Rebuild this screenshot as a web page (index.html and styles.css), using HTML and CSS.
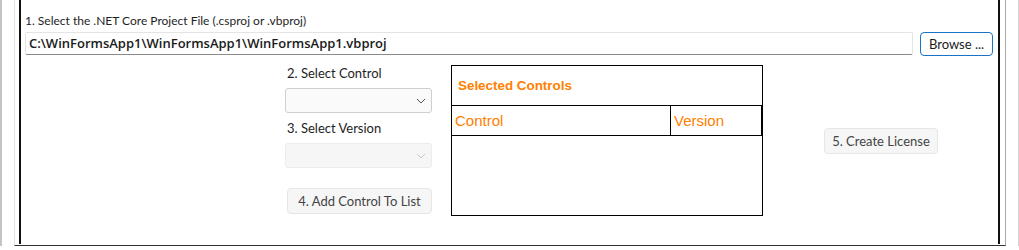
FILE: index.html
```html
<!DOCTYPE html>
<html lang="en">
<head>
    <meta charset="UTF-8">
    <title>License Creator</title>
    <link rel="stylesheet" href="styles.css">
</head>
<body>
    <div class="frame">
        <div class="panel">
            <div class="label">1. Select the .NET Core Project File (.csproj or .vbproj)</div>
            <div class="file-row">
                <div class="file-path">C:\WinFormsApp1\WinFormsApp1\WinFormsApp1.vbproj</div>
                <button class="browse-btn">Browse ...</button>
            </div>

            <div class="lower">
                <div class="picker">
                    <div class="label picker-label">2. Select Control</div>
                    <div class="select">
                        <svg width="10" height="6" viewBox="0 0 10 6"><path d="M1 1 L5 5 L9 1" fill="none" stroke="#555" stroke-width="1"/></svg>
                    </div>
                    <div class="label picker-label label-version">3. Select Version</div>
                    <div class="select disabled">
                        <svg width="10" height="6" viewBox="0 0 10 6"><path d="M1 1 L5 5 L9 1" fill="none" stroke="#c8c8c8" stroke-width="1"/></svg>
                    </div>
                    <button class="btn btn-add">4. Add Control To List</button>
                </div>

                <div class="list">
                    <div class="list-title">Selected Controls</div>
                    <div class="list-head">
                        <div class="col-control">Control</div>
                        <div class="col-version">Version</div>
                    </div>
                </div>

                <button class="btn btn-license">5. Create License</button>
            </div>
        </div>
    </div>
</body>
</html>
```

FILE: styles.css
```css
body {
    margin: 0;
    background-color: #fff;
    border-left: 2px solid #c4c4c4;
    border-right: 1px solid #d4d4d4;
    font-family: Lato, "Liberation Sans", sans-serif;
    color: #222;
}
.frame {
    margin-left: 12px;
    width: 990px;
    height: 245px;
    border-left: 1px solid #e2e2e2;
    border-right: 1px solid #a8a8a8;
    border-bottom: 1px solid #333;
    box-shadow: 0 1px 0 #a0a0a0;
}
.panel {
    margin-left: 4px;
    width: 968px;
    height: 231px;
    border-left: 2px solid #111;
    border-right: 2px solid #111;
    padding: 13px 5px 0 4px;
}
.label {
    font-size: 12px;
    line-height: 16px;
    color: #1e1e1e;
}
.picker-label {
    font-size: 13px;
    margin-left: 2px;
}
.file-row {
    display: flex;
    margin-top: 3px;
    height: 24px;
}
.file-path {
    flex: 1;
    height: 23px;
    box-sizing: border-box;
    border: 1px solid #e4e4e4;
    border-bottom: 1px solid #8a8a8a;
    border-radius: 2px;
    padding: 0 3px;
    font-family: "Open Sans", sans-serif;
    font-weight: 600;
    font-size: 13px;
    line-height: 21px;
    color: #1a1a1a;
}
.browse-btn {
    margin-left: 7px;
    width: 73px;
    height: 24px;
    background-color: #fff;
    border: 1px solid #1a73c8;
    border-radius: 4px;
    font-family: Lato, sans-serif;
    font-size: 13px;
    color: #1a1a1a;
    padding: 0;
}
.lower {
    display: flex;
    align-items: flex-start;
    margin-top: 9px;
    margin-left: 260px;
}
.picker {
    width: 147px;
}
.select {
    margin-top: 7px;
    height: 25px;
    box-sizing: border-box;
    border: 1px solid #cfcfcf;
    border-radius: 3px;
    background-color: #fafafa;
    display: flex;
    align-items: center;
    justify-content: flex-end;
    padding-right: 5px;
}
.select.disabled {
    border-color: #ececec;
    background-color: #f6f6f6;
}
.label-version {
    margin-top: 7px;
}
.btn {
    height: 26px;
    box-sizing: border-box;
    background-color: #f6f6f6;
    border: 1px solid #e6e6e6;
    border-radius: 4px;
    font-family: Lato, sans-serif;
    font-size: 13px;
    color: #444;
    padding: 0;
}
.btn-add {
    margin-top: 20px;
    margin-left: 2px;
    width: 145px;
}
.list {
    margin-left: 19px;
    width: 312px;
    height: 151px;
    box-sizing: border-box;
    border: 1px solid #000;
    font-family: Arial, "Liberation Sans", sans-serif;
    color: #ff8000;
}
.list-title {
    height: 40px;
    box-sizing: border-box;
    border-bottom: 1px solid #000;
    padding-left: 6px;
    display: flex;
    align-items: center;
    font-weight: bold;
    font-size: 13.4px;
}
.list-head {
    display: flex;
    height: 30px;
    box-sizing: border-box;
    border-bottom: 1px solid #000;
    border-right: 1px solid #000;
    font-size: 15px;
    line-height: 29px;
}
.col-control {
    width: 219px;
    border-right: 1px solid #000;
    padding-left: 3px;
    box-sizing: border-box;
}
.col-version {
    padding-left: 3px;
}
.btn-license {
    margin-top: 63px;
    margin-left: 61px;
    width: 114px;
}
```
